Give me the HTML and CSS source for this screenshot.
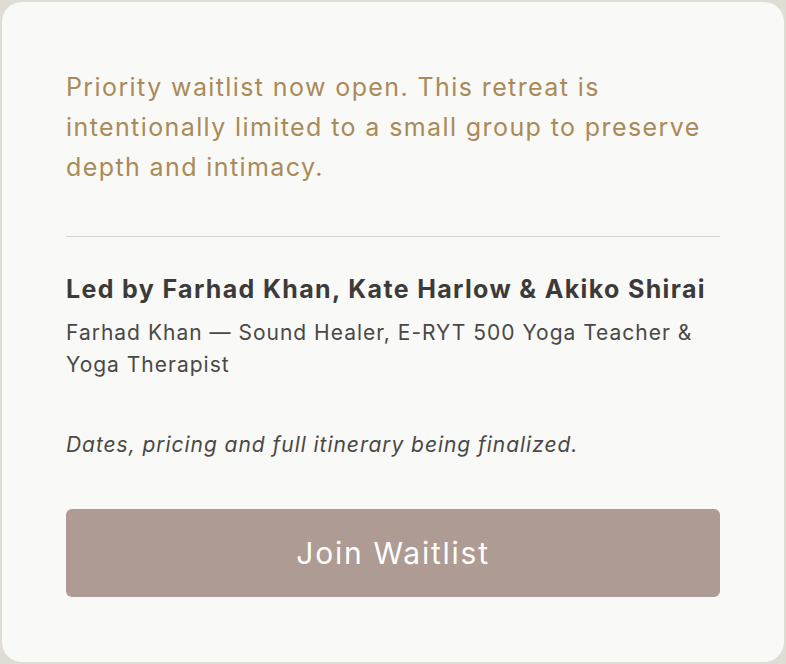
FILE: index.html
```html
<!DOCTYPE html>
<html lang="en">
<head>
<meta charset="utf-8">
<link rel="stylesheet" href="styles.css">
</head>
<body>
<main class="card">
  <p class="notice">Priority waitlist now open. This retreat is intentionally limited to a small group to preserve depth and intimacy.</p>
  <hr class="divider">
  <h2 class="leaders">Led by Farhad Khan, Kate Harlow &amp; Akiko Shirai</h2>
  <p class="bio">Farhad Khan — Sound Healer, E-RYT 500 Yoga Teacher &amp; Yoga Therapist</p>
  <p class="status">Dates, pricing and full itinerary being finalized.</p>
  <button class="cta" type="button">Join Waitlist</button>
</main>
</body>
</html>
```
FILE: styles.css
```css
html, body {
  margin: 0;
  padding: 0;
}
body {
  background: #dfdcd4;
  padding: 2px;
  width: 782px;
  height: 660px;
  font-family: "Inter", "Noto Sans", sans-serif;
}
.card {
  box-sizing: border-box;
  height: 660px;
  background: #f9f9f7;
  border-radius: 20px;
  padding: 65px 64px 0 64px;
  display: flex;
  flex-direction: column;
}
.notice {
  margin: 0;
  font-size: 25px;
  letter-spacing: 1.4px;
  line-height: 40px;
  color: #a98a58;
}
.divider {
  border: 0;
  border-top: 1px solid #d5d2cc;
  margin: 49px 0 36px;
  height: 0;
}
.leaders {
  margin: 0;
  font-size: 25px;
  letter-spacing: 1.35px;
  line-height: 32px;
  font-weight: 700;
  color: #3d3b39;
}
.bio {
  margin: 12px 0 0;
  font-size: 21px;
  letter-spacing: 1px;
  line-height: 32px;
  color: #4a4846;
}
.status {
  margin: 48px 0 0;
  font-size: 21px;
  letter-spacing: 0.95px;
  line-height: 32px;
  font-style: italic;
  color: #4a4846;
}
.cta {
  margin-top: 48px;
  height: 88px;
  border: 0;
  border-radius: 6px;
  background: #ae9b93;
  color: #ffffff;
  font-family: inherit;
  font-size: 30px;
  letter-spacing: 1.75px;
}
```
